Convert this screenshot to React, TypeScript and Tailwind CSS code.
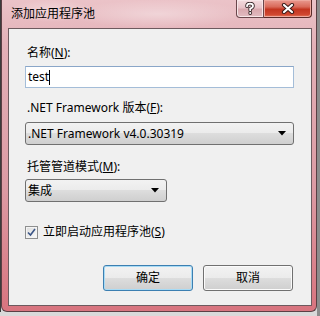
import React from "react";

const font = { fontFamily: '"Noto Sans", "Noto Sans CJK SC", sans-serif' };

function Arrow() {
  return (
    <svg width="8" height="5" viewBox="0 0 8 5" className="block">
      <path d="M0 0 H8 L4 4.5 Z" fill="#000" />
    </svg>
  );
}

function Combo({ text, w }: { text: string; w: string }) {
  return (
    <div
      className={`${w} h-[23px] flex items-center justify-between rounded-[3px] border border-[#707070] bg-[linear-gradient(#f2f2f2_0%,#ebebeb_50%,#dddddd_50%,#cfcfcf_100%)] pl-[2px] pr-[7px] text-[12px] text-black leading-[16px]`}
    >
      <span>{text}</span>
      <Arrow />
    </div>
  );
}

function Btn({ label, primary }: { label: string; primary?: boolean }) {
  return (
    <div
      className={`w-[90px] h-[26px] rounded-[3px] border ${
        primary ? "border-[#3c7fb1] shadow-[inset_0_0_0_1px_#a8dbf5]" : "border-[#707070] shadow-[inset_0_0_0_1px_#fbfbfb]"
      } bg-[linear-gradient(#f2f2f2_0%,#ebebeb_50%,#dddddd_50%,#cfcfcf_100%)] flex items-center justify-center text-[12px] text-black leading-[16px]`}
    >
      {label}
    </div>
  );
}

export default function App() {
  return (
    <div className="w-[320px] h-[316px] flex bg-[#d9d9d9] overflow-hidden" style={font}>
      <div className="w-[1px] h-[312px] bg-[#3c3c3c]" />
      <div className="w-[316px] h-[312px] shrink-0 flex flex-col border-x border-b border-[#5b3f44] rounded-b-[6px] bg-[linear-gradient(#ebc3c8_0%,#e3b0b7_15%,#dc9ba4_60%,#d8747f_100%)] px-[6px] pr-[4px]">
        <div className="h-[28px] flex items-start justify-between bg-[radial-gradient(ellipse_90px_14px_at_150px_14px,rgba(255,255,255,0.35),transparent)]">
          <div className="pl-[3px] pt-[6px] text-[12px] leading-[16px] text-black bg-[radial-gradient(ellipse_closest-side,rgba(255,255,255,0.35),transparent)]">
            添加应用程序池
          </div>
          <div className="flex">
            <div className="w-[28px] h-[18px] flex items-center justify-center border border-t-0 border-[#6a474c] rounded-bl-[4px] bg-[linear-gradient(#f3dcdf_0%,#e8c3c8_45%,#d9a9af_55%,#e2bcc1_100%)] shadow-[inset_0_0_0_1px_#f7e6e8]">
              <svg width="10" height="13" viewBox="0 0 10 13">
                <path d="M2 4.2 Q2 1.6 5 1.6 Q8 1.6 8 4 Q8 5.6 5.2 6.6 L5.2 8.2" fill="none" stroke="#3a2a2c" strokeWidth="3.6" strokeLinecap="round" />
                <circle cx="5.2" cy="11" r="1.9" fill="#3a2a2c" />
                <path d="M2 4.2 Q2 1.6 5 1.6 Q8 1.6 8 4 Q8 5.6 5.2 6.6 L5.2 8.2" fill="none" stroke="#fff" strokeWidth="1.8" strokeLinecap="round" />
                <circle cx="5.2" cy="11" r="1" fill="#fff" />
              </svg>
            </div>
            <div className="w-[48px] h-[18px] flex items-center justify-center border border-l-0 border-t-0 border-[#5a2a28] rounded-br-[4px] bg-[linear-gradient(#e99a90_0%,#d96a5a_40%,#c33520_55%,#cf4630_85%,#e67a5c_100%)] shadow-[inset_0_0_0_1px_#eea89e]">
              <svg width="14" height="11" viewBox="0 0 14 11">
                <path d="M3 2 L11 9 M11 2 L3 9" stroke="#3a1c1a" strokeWidth="4.2" strokeLinecap="round" />
                <path d="M3 2 L11 9 M11 2 L3 9" stroke="#fff" strokeWidth="2.2" strokeLinecap="round" />
              </svg>
            </div>
          </div>
        </div>
        <div className="w-[304px] h-[278px] border border-[#6d5a5e] bg-[#f0f0f0] pl-[16px] flex flex-col text-[12px] leading-[16px] text-black">
          <div className="mt-[16px] pl-[2px]">
            名称(<span className="underline">N</span>):
          </div>
          <div className="mt-[5px] w-[269px] h-[22px] border border-[#a4bdd8] border-t-[#8aa6c8] bg-white flex items-center pl-[2px]">
            <span>test</span>
            <span className="w-[1px] h-[15px] bg-black" />
          </div>
          <div className="mt-[12px] pl-[2px]">
            .NET Framework 版本(<span className="underline">F</span>):
          </div>
          <div className="mt-[6px]">
            <Combo text=".NET Framework v4.0.30319" w="w-[269px]" />
          </div>
          <div className="mt-[14px] pl-[2px]">
            托管管道模式(<span className="underline">M</span>):
          </div>
          <div className="mt-[4px]">
            <Combo text="集成" w="w-[142px]" />
          </div>
          <div className="mt-[22px] h-[16px] flex items-center gap-[5px]">
            <div className="w-[13px] h-[13px] border border-[#8e8f8f] bg-[linear-gradient(135deg,#dcdcdc,#fbfbfb)] flex items-center justify-center shadow-[inset_0_0_0_1px_#f4f4f4]">
              <svg width="9" height="9" viewBox="0 0 9 9">
                <path d="M1 4.5 L3.5 7 L8 1" fill="none" stroke="#3b5586" strokeWidth="1.6" />
              </svg>
            </div>
            <span>
              立即启动应用程序池(<span className="underline">S</span>)
            </span>
          </div>
          <div className="mt-[25px] ml-[78px] flex gap-[10px]">
            <Btn label="确定" primary />
            <Btn label="取消" />
          </div>
        </div>
      </div>
      <div className="flex-1 h-full bg-[#8c8c8c]" />
    </div>
  );
}
